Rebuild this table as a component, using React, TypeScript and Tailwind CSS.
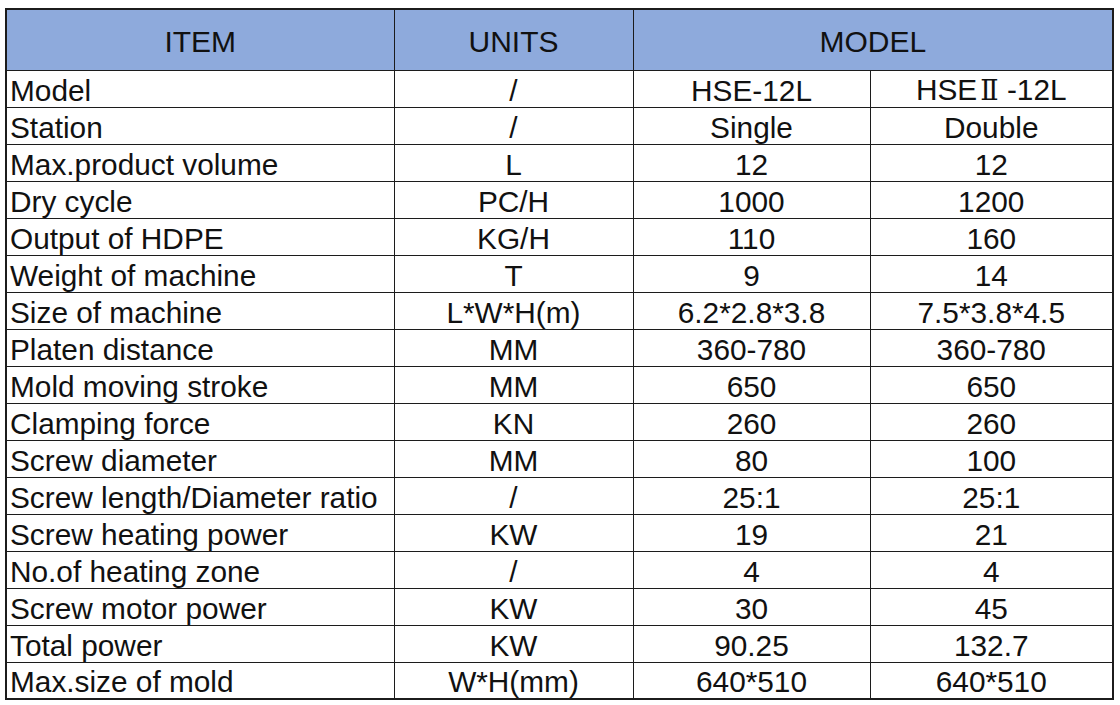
import React from 'react';

type Row = [string, string, string, string];

const rows: Row[] = [
  ['Model', '/', 'HSE-12L', 'HSEII'],
  ['Station', '/', 'Single', 'Double'],
  ['Max.product volume', 'L', '12', '12'],
  ['Dry cycle', 'PC/H', '1000', '1200'],
  ['Output of HDPE', 'KG/H', '110', '160'],
  ['Weight of machine', 'T', '9', '14'],
  ['Size of machine', 'L*W*H(m)', '6.2*2.8*3.8', '7.5*3.8*4.5'],
  ['Platen distance', 'MM', '360-780', '360-780'],
  ['Mold moving stroke', 'MM', '650', '650'],
  ['Clamping force', 'KN', '260', '260'],
  ['Screw diameter', 'MM', '80', '100'],
  ['Screw length/Diameter ratio', '/', '25:1', '25:1'],
  ['Screw heating power', 'KW', '19', '21'],
  ['No.of heating zone', '/', '4', '4'],
  ['Screw motor power', 'KW', '30', '45'],
  ['Total power', 'KW', '90.25', '132.7'],
  ['Max.size of mold', 'W*H(mm)', '640*510', '640*510'],
];

function ModelName() {
  // the roman numeral comes from a serif CJK font in the original sheet
  return (
    <span>
      HSE
      <span className="font-['DejaVu_Serif','Noto_Sans_CJK_SC',serif] font-light text-[27px] ml-[3px]">Ⅱ</span> -12L
    </span>
  );
}

export default function App() {
  return (
    <div className="w-[1120px] h-[705px] bg-white overflow-hidden pt-[8px] pl-[5px] font-['Liberation_Sans',Arial,sans-serif] text-[#111]">
      <table className="border-collapse table-fixed w-[1107px] border-2 border-[#1c1c1c]">
        <colgroup>
          <col className="w-[388px]" />
          <col className="w-[239px]" />
          <col className="w-[237px]" />
          <col className="w-[243px]" />
        </colgroup>
        <thead>
          <tr className="h-[61px] bg-[#8eaadc] text-[30px]">
            <th className="font-normal border-[1.5px] border-[#1c1c1c] pt-[5px] leading-none">ITEM</th>
            <th className="font-normal border-[1.5px] border-[#1c1c1c] pt-[5px] leading-none">UNITS</th>
            <th colSpan={2} className="font-normal border-[1.5px] border-[#1c1c1c] pt-[5px] leading-none">
              MODEL
            </th>
          </tr>
        </thead>
        <tbody className="text-[29.8px]">
          {rows.map((r) => (
            <tr key={r[0]} className="h-[37px]">
              <td className="border-[1.5px] border-[#1c1c1c] align-bottom pl-[3px] p-0 leading-[33px] whitespace-nowrap">
                {r[0]}
              </td>
              <td className="border-[1.5px] border-[#1c1c1c] align-bottom text-center p-0 leading-[33px] whitespace-nowrap">
                {r[1]}
              </td>
              <td className="border-[1.5px] border-[#1c1c1c] align-bottom text-center p-0 leading-[33px] whitespace-nowrap">
                {r[2]}
              </td>
              <td className="border-[1.5px] border-[#1c1c1c] align-bottom text-center p-0 leading-[33px] whitespace-nowrap">
                {r[3] === 'HSEII' ? <ModelName /> : r[3]}
              </td>
            </tr>
          ))}
        </tbody>
      </table>
    </div>
  );
}
